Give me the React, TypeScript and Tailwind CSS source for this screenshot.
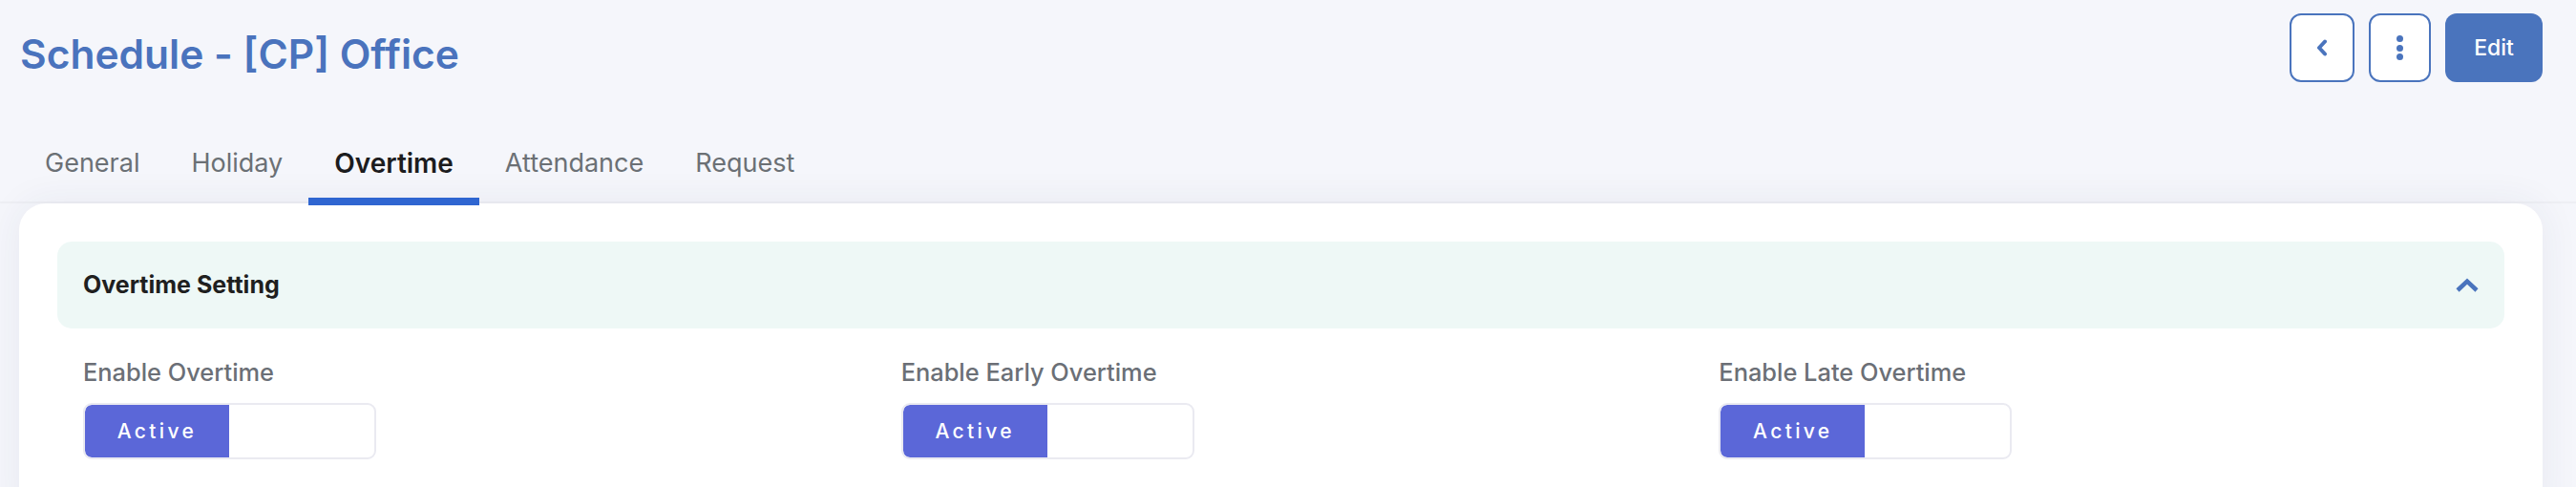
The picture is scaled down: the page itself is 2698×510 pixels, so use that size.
import { useState } from 'react';

const TABS = ['General', 'Holiday', 'Overtime', 'Attendance', 'Request'] as const;

const FIELDS = ['Enable Overtime', 'Enable Early Overtime', 'Enable Late Overtime'];

function ActiveToggle() {
  return (
    <div className="flex h-[59px] w-[307px] overflow-hidden rounded-[9px] border-2 border-[#eaeaf1] bg-white">
      <div className="flex w-[151px] items-center justify-center rounded-l-[7px] bg-[#5b67d8] text-[21px] font-medium tracking-[0.16em] text-white">
        Active
      </div>
    </div>
  );
}

export default function App() {
  const [tab, setTab] = useState<(typeof TABS)[number]>('Overtime');

  return (
    <div className="min-h-[510px] overflow-hidden bg-[#f5f6fb] pl-[20px] pr-[35px] font-['Inter',sans-serif]">
      <header className="flex h-[86px] items-start justify-between pt-[14px]">
        <h1 className="mt-[6px] pl-[1px] text-[42.5px] leading-[74px] font-semibold text-[#4a73bd]">
          Schedule - [CP] Office
        </h1>
        <div className="flex gap-[15px]">
          <button
            type="button"
            className="flex h-[72px] w-[68px] items-center justify-center rounded-[12px] border-2 border-[#4a74bd] bg-white"
          >
            <svg width="14" height="18" viewBox="0 0 14 18" fill="none">
              <path d="M10 2.5 L4 9 L10 15.5" stroke="#4a74bd" strokeWidth="4" strokeLinecap="round" strokeLinejoin="round" />
            </svg>
          </button>
          <button
            type="button"
            className="flex h-[72px] w-[65px] flex-col items-center justify-center gap-[2.5px] rounded-[12px] border-2 border-[#4a74bd] bg-white"
          >
            <span className="h-[7px] w-[7px] rounded-full bg-[#4a74bd]" />
            <span className="h-[7px] w-[7px] rounded-full bg-[#4a74bd]" />
            <span className="h-[7px] w-[7px] rounded-full bg-[#4a74bd]" />
          </button>
          <button
            type="button"
            className="h-[72px] w-[102px] rounded-[12px] bg-[#4a74bd] text-[23px] font-medium text-white"
          >
            Edit
          </button>
        </div>
      </header>

      <nav className="-mr-[35px] -ml-[20px] mt-[45px] flex border-b-2 border-[#eeeff4] pl-[20px]">
        {TABS.map((t) => (
          <button
            key={t}
            type="button"
            onClick={() => setTab(t)}
            className={
              t === tab
                ? 'relative flex h-[80px] items-center px-[27px] text-[28px] font-semibold text-[#1c1c1e]'
                : 'relative flex h-[80px] items-center px-[27px] text-[27px] text-[#6b7075]'
            }
          >
            {t}
            {t === tab ? (
              <span className="absolute right-0 -bottom-[4px] left-0 z-10 h-[8px] bg-[#2f66d1]" />
            ) : null}
          </button>
        ))}
      </nav>

      <section className="rounded-t-[28px] bg-white p-[40px] pb-[60px] shadow-[0_0_40px_rgba(40,50,100,0.07)]">
        <div className="flex h-[91px] items-center justify-between rounded-[15px] bg-[#eef8f6] pr-[26px] pl-[27px]">
          <h2 className="text-[25px] font-bold text-[#1f1f1f]">Overtime Setting</h2>
          <svg width="26" height="16" viewBox="0 0 26 16" fill="none">
            <path d="M3 13 L13 3.5 L23 13" stroke="#4a74bd" strokeWidth="4.5" strokeLinejoin="miter" />
          </svg>
        </div>

        <div className="mt-[31px] grid grid-cols-3 gap-x-[61px] px-[27px]">
          {FIELDS.map((label) => (
            <div key={label}>
              <p className="text-[25.4px] leading-[30px] font-medium text-[#6b6f76]">{label}</p>
              <div className="mt-[17px]">
                <ActiveToggle />
              </div>
            </div>
          ))}
        </div>
      </section>
    </div>
  );
}
